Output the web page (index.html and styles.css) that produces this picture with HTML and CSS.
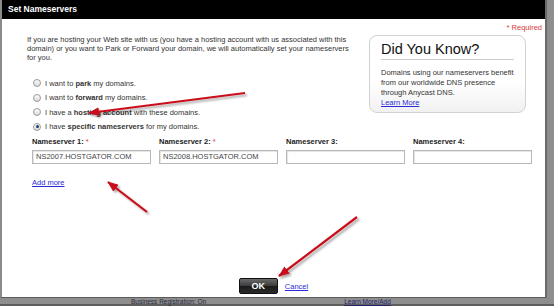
FILE: index.html
```html
<!DOCTYPE html>
<html lang="en">
<head>
    <meta charset="UTF-8">
    <title>Set Nameservers</title>
    <link rel="stylesheet" href="styles.css">
</head>
<body>

    <div class="dialog">
        <div class="titlebar">Set Nameservers</div>

        <div class="dialog-body">
            <div class="required">* Required</div>

            <div class="top-row">
                <div class="left-col">
                    <p class="intro">If you are hosting your Web site with us (you have a hosting account with us associated with this domain) or you want to Park or Forward your domain, we will automatically set your nameservers for you.</p>

                    <ul class="options">
                        <li><span class="radio"></span><span>I want to <b>park</b> my domains.</span></li>
                        <li><span class="radio"></span><span>I want to <b>forward</b> my domains.</span></li>
                        <li><span class="radio"></span><span>I have a <b>hosting account</b> with these domains.</span></li>
                        <li><span class="radio checked"></span><span>I have <b>specific nameservers</b> for my domains.</span></li>
                    </ul>
                </div>

                <div class="tip-box">
                    <h2>Did You Know?</h2>
                    <p>Domains using our nameservers benefit from our worldwide DNS presence through Anycast DNS.</p>
                    <a href="#">Learn More</a>
                </div>
            </div>

            <div class="ns-grid">
                <div class="ns-field">
                    <label>Nameserver 1: <span class="star">*</span></label>
                    <div class="ns-input">NS2007.HOSTGATOR.COM</div>
                </div>
                <div class="ns-field">
                    <label>Nameserver 2: <span class="star">*</span></label>
                    <div class="ns-input">NS2008.HOSTGATOR.COM</div>
                </div>
                <div class="ns-field">
                    <label>Nameserver 3:</label>
                    <div class="ns-input"></div>
                </div>
                <div class="ns-field">
                    <label>Nameserver 4:</label>
                    <div class="ns-input"></div>
                </div>
            </div>

            <a href="#" class="add-more">Add more</a>

            <div class="actions">
                <span class="ok-btn">OK</span>
                <a href="#">Cancel</a>
            </div>
        </div>
    </div>

    <!-- page behind the overlay -->
    <div class="behind">
        <span class="behind-text">Business Registration: On</span>
        <a href="#" class="behind-link">Learn More/Add</a>
    </div>

    <!-- red arrows drawn over the screenshot -->
    <svg class="arrows" width="554" height="306" viewBox="0 0 554 306">
        <defs>
            <marker id="head" markerWidth="5" markerHeight="4" refX="4.6" refY="2" orient="auto" markerUnits="strokeWidth">
                <path d="M0,0 L5,2 L0,4 z" fill="#c8101a"/>
            </marker>
            <filter id="shadow" x="-20%" y="-20%" width="140%" height="140%">
                <feDropShadow dx="2" dy="2" stdDeviation="1.2" flood-color="#000" flood-opacity="0.35"/>
            </filter>
        </defs>
        <g filter="url(#shadow)" stroke="#c8101a" stroke-width="2.2" fill="none" marker-end="url(#head)">
            <line x1="245" y1="93" x2="89" y2="113"/>
            <line x1="147" y1="212" x2="108" y2="182"/>
            <line x1="357" y1="217" x2="279" y2="276"/>
        </g>
    </svg>

</body>
</html>
```

FILE: styles.css
```css
* { margin: 0; padding: 0; box-sizing: border-box; }

body {
    width: 554px;
    height: 306px;
    overflow: hidden;
    position: relative;
    background: #8e8e8e;
    font-family: "Liberation Sans", Arial, sans-serif;
    font-size: 7.5px;
    color: #333;
}

a { color: #2b2bd6; text-decoration: underline; }

/* ДИАЛОГ */
.dialog {
    width: 547px;
    height: 298px;
    background: #fff;
    border-left: 2px solid #8a8a8a;
    border-right: 2px solid #6a6a6a;
    border-bottom: 1px solid #5a5a5a;
    display: flex;
    flex-direction: column;
}

.titlebar {
    height: 19px;
    background: #000;
    color: #fff;
    font-size: 8.5px;
    font-weight: bold;
    line-height: 19px;
    padding-left: 6px;
}

.dialog-body {
    flex: 1;
    display: flex;
    flex-direction: column;
    padding-bottom: 3px;
}

.required {
    color: #d83a3a;
    text-align: right;
    padding-right: 3px;
    margin-top: 4px;
    height: 10px;
    line-height: 10px;
}

.top-row {
    display: flex;
    padding-left: 25px;
    margin-top: 2px;
}

.left-col { width: 342px; }

.intro { width: 330px; line-height: 9px; }

.options { list-style: none; margin-top: 14px; padding-left: 6px; }
.options li { display: flex; align-items: center; height: 14.5px; }

.radio {
    width: 8px;
    height: 8px;
    border-radius: 50%;
    border: 1px solid #9a9a9a;
    background: linear-gradient(#fdfdfd, #d9d9d9);
    margin-right: 4px;
    position: relative;
}
.radio.checked::after {
    content: "";
    position: absolute;
    left: 1.5px;
    top: 1.5px;
    width: 3px;
    height: 3px;
    border-radius: 50%;
    background: #203a6a;
}

/* БЛОК "DID YOU KNOW" */
.tip-box {
    width: 157px;
    height: 78px;
    border: 1px solid #d2d2d2;
    border-radius: 8px;
    background: linear-gradient(#fff 60%, #f1f1f1);
    padding: 4px 11px 0 11px;
    line-height: 10px;
}
.tip-box h2 {
    font-size: 14.5px;
    font-weight: normal;
    color: #111;
    line-height: 18px;
    border-bottom: 1px solid #ccc;
    padding-bottom: 1px;
    margin-bottom: 8px;
}
.tip-box p { width: 136px; }

/* НЕЙМСЕРВЕРЫ */
.ns-grid {
    display: grid;
    grid-template-columns: repeat(4, 119px);
    gap: 8px;
    padding-left: 30px;
    margin-top: 3px;
}
.ns-field label { display: block; font-weight: bold; color: #222; height: 10px; line-height: 10px; margin-bottom: 3px; }
.ns-field .star { color: #d83a3a; font-weight: normal; }

.ns-input {
    height: 14px;
    border: 1px solid #b8b8b8;
    box-shadow: inset 1px 1px 1px #e4e4e4;
    padding-left: 3px;
    line-height: 12px;
    color: #444;
}

.add-more { margin: 14px 0 0 30px; align-self: flex-start; }

.actions {
    margin-top: auto;
    display: flex;
    justify-content: center;
    align-items: center;
    gap: 7px;
}

.ok-btn {
    width: 39px;
    height: 16px;
    border: 1px solid #111;
    border-radius: 2px;
    background: linear-gradient(#6a6a6a, #3a3a3a 50%, #1a1a1a 52%, #2a2a2a);
    color: #fff;
    font-size: 9px;
    font-weight: bold;
    text-align: center;
    line-height: 14px;
}

/* СТРАНИЦА ЗА ОКНОМ */
.behind {
    height: 8px;
    display: flex;
    align-items: center;
    padding-left: 131px;
    gap: 138px;
    font-size: 6.5px;
    line-height: 7px;
    border-bottom: 2px solid #5e5e5e;
}
.behind-text { color: #2a2a40; }
.behind-link { color: #24246a; }

.arrows { position: absolute; left: 0; top: 0; pointer-events: none; }
```
